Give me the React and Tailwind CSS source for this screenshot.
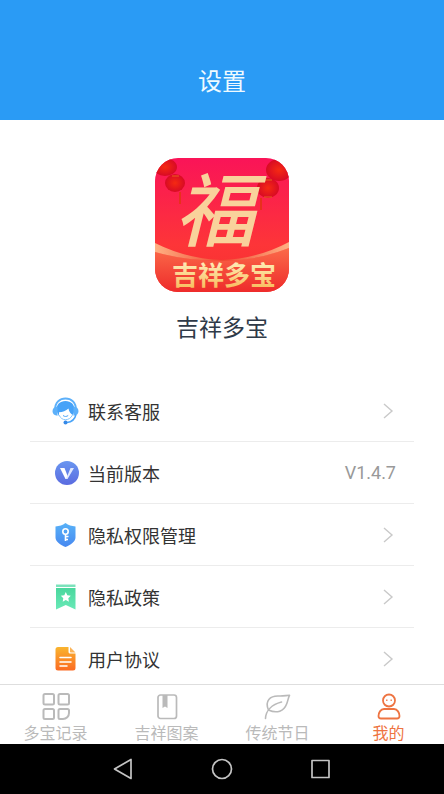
import React from "react";

function AppLogo() {
  return (
    <svg className="h-[134px] w-[134px]" viewBox="0 0 134 134" role="img" aria-label="吉祥多宝">
      <defs>
        <linearGradient id="logoRed" x1="0" y1="0" x2="0" y2="1">
          <stop offset="0" stopColor="#fa1458" />
          <stop offset="0.65" stopColor="#fd3538" />
          <stop offset="1" stopColor="#f4302c" />
        </linearGradient>
        <linearGradient id="logoBase" x1="0" y1="0" x2="0" y2="1">
          <stop offset="0" stopColor="#fb6a49" />
          <stop offset="1" stopColor="#ee2b2b" />
        </linearGradient>
        <linearGradient id="logoRibbon" x1="0" y1="0" x2="1" y2="0">
          <stop offset="0" stopColor="#ffb183" />
          <stop offset="0.5" stopColor="#f04a32" />
          <stop offset="1" stopColor="#ffb183" />
        </linearGradient>
        <linearGradient id="logoGold" x1="0" y1="0" x2="0" y2="1">
          <stop offset="0" stopColor="#fffbd0" />
          <stop offset="1" stopColor="#f8b552" />
        </linearGradient>
        <radialGradient id="logoLantern">
          <stop offset="0" stopColor="#f52a12" />
          <stop offset="1" stopColor="#d80a24" />
        </radialGradient>
        <clipPath id="logoClip">
          <rect width="134" height="134" rx="23" />
        </clipPath>
      </defs>
      <g clipPath="url(#logoClip)">
        <rect width="134" height="134" fill="url(#logoRed)" />
        <path d="M25 34v12M106 40v12" stroke="#e8301c" strokeWidth="2" />
        <ellipse cx="10" cy="9" rx="12" ry="9" fill="url(#logoLantern)" />
        <ellipse cx="20" cy="25" rx="10" ry="9" fill="url(#logoLantern)" />
        <ellipse cx="124" cy="12" rx="13" ry="11" fill="url(#logoLantern)" />
        <ellipse cx="113" cy="30" rx="11" ry="10" fill="url(#logoLantern)" />
        <path d="M17 18h7M109 22h8M109 39h8" stroke="#e9601f" strokeWidth="1" />
        <path d="M0 94Q34 103 67 103T134 90V134H0Z" fill="url(#logoBase)" />
        <path d="M0 85Q32 101 67 102Q102 101 134 84V90Q101 103 67 103Q32 103 0 94Z" fill="url(#logoRibbon)" />
        <text
          x="60"
          y="82"
          textAnchor="middle"
          fill="#f9d29b"
          fontSize="80"
          className="font-['Noto_Sans_CJK_SC',sans-serif] font-medium italic"
        >
          福
        </text>
        <text
          x="69"
          y="127"
          textAnchor="middle"
          fill="url(#logoGold)"
          fontSize="26"
          className="font-['Noto_Sans_CJK_SC',sans-serif] font-bold"
        >
          吉祥多宝
        </text>
      </g>
    </svg>
  );
}

function SupportIcon() {
  return (
    <svg className="h-7 w-7 shrink-0" viewBox="0 0 28 28" aria-hidden="true">
      <path d="M3 13C3 5 8 1.500 13.500 1.500S24 5 24 13" fill="none" stroke="#5cb0fa" strokeWidth="1.800" />
      <path d="M4.500 14C4 7.500 8 4 13.500 4s9.500 3.500 9 10l-1.500 4c-2.500-1-4-3.500-4.500-6.500-2.500 2.500-6 3.500-9.500 3.700V19Z" fill="#46a2f8" />
      <path d="M7 18c1.500 3.200 3.700 4.700 6.500 4.700 3 0 5.500-1.700 7-4.700" fill="none" stroke="#8ac8fc" strokeWidth="1" />
      <path d="M5.500 9.500v9.200C2.500 18.500.5 17 .5 14.200s2-4.500 5-4.700ZM21.500 9.500v9.200c3-.2 5-1.700 5-4.500s-2-4.500-5-4.700Z" fill="#5cb0fa" />
      <path d="M24 17.500c-1 4.500-4.500 7.500-9 8" fill="none" stroke="#4ba4f8" strokeWidth="1.500" />
      <path d="M11 18.500c1.700 1.300 3.500 1.300 5.200 0" fill="none" stroke="#4ba4f8" strokeWidth="1" />
      <circle cx="13.500" cy="25.500" r="2" fill="#3489e8" />
    </svg>
  );
}

function VersionIcon() {
  return (
    <svg className="h-7 w-7 shrink-0" viewBox="0 0 28 28" aria-hidden="true">
      <defs>
        <linearGradient id="versionFill" x1="0" y1="0" x2="0" y2="1">
          <stop offset="0" stopColor="#6a96f0" />
          <stop offset="1" stopColor="#5a6be0" />
        </linearGradient>
      </defs>
      <circle cx="15" cy="14" r="12" fill="url(#versionFill)" />
      <path d="M8 9h4.500l3.500 9-1.500 2h-1Z" fill="#fff" />
      <path d="M18.500 9H22l-6.500 11h-2l2-3.500Z" fill="#dfe8ff" />
    </svg>
  );
}

function ShieldIcon() {
  return (
    <svg className="h-7 w-7 shrink-0" viewBox="0 0 28 28" aria-hidden="true">
      <defs>
        <linearGradient id="shieldFill" x1="0" y1="0" x2="0" y2="1">
          <stop offset="0" stopColor="#58b2f8" />
          <stop offset="1" stopColor="#4788f0" />
        </linearGradient>
      </defs>
      <path d="M13.500 2c3 2.500 6 3 10 3.500v11c0 4-5 7.500-10 9.500-5-2-10-5.500-10-9.500v-11c4-.5 7-1 10-3.500Z" fill="url(#shieldFill)" />
      <g fill="none" stroke="#fff" strokeWidth="1.600">
        <circle cx="13.500" cy="10.500" r="2.700" />
        <path d="M13.500 13v7M13.500 15.500h3M13.500 18.500h2.500" />
      </g>
    </svg>
  );
}

function BookmarkIcon() {
  return (
    <svg className="h-7 w-7 shrink-0" viewBox="0 0 28 28" aria-hidden="true">
      <defs>
        <linearGradient id="bookmarkFill" x1="0" y1="0" x2="0" y2="1">
          <stop offset="0" stopColor="#4ad79d" />
          <stop offset="1" stopColor="#69e9b7" />
        </linearGradient>
      </defs>
      <path d="M4 1.500h19.500V4H4Z" fill="#7be2bb" />
      <path d="M4 5h19.500v21.500l-9.700-4.500L4 26.500Z" fill="url(#bookmarkFill)" />
      <path d="m13.800 9 1.500 3.200 3.500.5-2.500 2.500.6 3.500-3.100-1.700-3.100 1.700.6-3.500-2.500-2.500 3.500-.5Z" fill="#fff" />
    </svg>
  );
}

function DocumentIcon() {
  return (
    <svg className="h-7 w-7 shrink-0" viewBox="0 0 28 28" aria-hidden="true">
      <defs>
        <linearGradient id="documentFill" x1="0" y1="0" x2="0" y2="1">
          <stop offset="0" stopColor="#f9b52f" />
          <stop offset="1" stopColor="#fb6a22" />
        </linearGradient>
      </defs>
      <path d="M6 2h10.500v4.500c0 1.500.5 2 2 2h5V23a2.500 2.500 0 0 1-2.500 2.500H6A2.500 2.500 0 0 1 3.500 23V4.500A2.500 2.500 0 0 1 6 2Z" fill="url(#documentFill)" />
      <path d="m18 2 5.500 5.500H19c-.7 0-1-.3-1-1Z" fill="#fbb458" />
      <path d="M8 12.500h11M8 17h11M8 21h7" stroke="#fff" strokeWidth="1.500" strokeLinecap="round" />
    </svg>
  );
}

function Chevron() {
  return (
    <svg className="h-4 w-4" viewBox="0 0 16 16" fill="none" stroke="#c9c9c9" strokeWidth="1.400" aria-hidden="true">
      <path d="m4 1 8 7-8 7" />
    </svg>
  );
}

function GridIcon() {
  return (
    <svg className="h-7 w-7" viewBox="0 0 28 28" fill="none" stroke="currentColor" strokeWidth="2" aria-hidden="true">
      <rect x="1.500" y="2" width="10.500" height="10.500" rx="1.500" />
      <rect x="16.500" y="2" width="10.500" height="10.500" rx="1.500" />
      <rect x="1.500" y="17" width="10.500" height="10" rx="1.500" />
      <path d="M18 17h7.500a1.500 1.500 0 0 1 1.500 1.500v2.500a6 6 0 0 1-6 6h-3a1.500 1.500 0 0 1-1.500-1.500v-7A1.500 1.500 0 0 1 18 17Z" />
    </svg>
  );
}

function BookIcon() {
  return (
    <svg className="h-7 w-7" viewBox="0 0 28 28" fill="none" stroke="currentColor" strokeWidth="1.700" aria-hidden="true">
      <rect x="5" y="3" width="18.500" height="23.500" rx="2.500" />
      <path d="M9.500 3h5v13l-2.500-1.500L9.500 16Z" fill="currentColor" stroke="none" />
    </svg>
  );
}

function LeafIcon() {
  return (
    <svg className="h-7 w-7" viewBox="0 0 28 28" fill="none" stroke="currentColor" strokeWidth="1.600" strokeLinecap="round" strokeLinejoin="round" aria-hidden="true">
      <path d="M4.500 18C.5 9 6 3.500 15 4c4 .2 7-.5 10.500-.7-1.500 3-1.500 5.500-3 9C20 19 13 22 4.500 18Z" />
      <path d="M1.500 26.500c.3-8 6.500-14 16-16.500" />
    </svg>
  );
}

function PersonIcon() {
  return (
    <svg className="h-7 w-7" viewBox="0 0 28 28" fill="none" stroke="currentColor" strokeWidth="1.800" aria-hidden="true">
      <circle cx="14" cy="8.500" r="6" />
      <path d="M11.800 7.500v1.500M16.200 7.500v1.500" strokeWidth="1.300" />
      <path d="M9 17h10c3.500 0 5.500 4 5.500 7 0 1.500-.8 2.500-2.500 2.500H6c-1.700 0-2.500-1-2.500-2.500 0-3 2-7 5.500-7Z" />
    </svg>
  );
}

const rows = [
  { label: "联系客服", Icon: SupportIcon },
  { label: "当前版本", Icon: VersionIcon, value: "V1.4.7" },
  { label: "隐私权限管理", Icon: ShieldIcon },
  { label: "隐私政策", Icon: BookmarkIcon },
  { label: "用户协议", Icon: DocumentIcon },
];

const tabs = [
  { label: "多宝记录", Icon: GridIcon },
  { label: "吉祥图案", Icon: BookIcon },
  { label: "传统节日", Icon: LeafIcon },
  { label: "我的", Icon: PersonIcon, active: true },
];

export default function App() {
  return (
    <div className="flex h-screen flex-col bg-white font-['Noto_Sans_CJK_SC',sans-serif]">
      <header className="flex h-[120px] shrink-0 items-end justify-center bg-[#2a9bf5] pb-6">
        <h1 className="text-2xl text-[#eefaff]">设置</h1>
      </header>

      <main className="min-h-0 flex-1 overflow-hidden px-[30px] pt-[38px]">
        <div className="flex flex-col items-center gap-[18px]">
          <AppLogo />
          <h2 className="text-[23px] leading-8 text-[#2f3a48]">吉祥多宝</h2>
        </div>
        <ul className="mt-[38px] divide-y divide-[#ececec]">
          {rows.map(({ label, Icon, value }) => (
            <li key={label}>
              <button type="button" className="flex h-[61px] w-full items-center gap-2 pr-[18px] pl-[22px] text-left">
                <Icon />
                <span className="flex-1 text-lg text-[#333333]">{label}</span>
                {value ? (
                  <span className="font-['Roboto',sans-serif] text-lg text-[#999999]">{value}</span>
                ) : (
                  <Chevron />
                )}
              </button>
            </li>
          ))}
        </ul>
      </main>

      <nav className="grid h-[60px] shrink-0 grid-cols-4 border-t border-[#dedede] bg-white">
        {tabs.map(({ label, Icon, active }) => (
          <button
            key={label}
            type="button"
            aria-current={active ? "page" : undefined}
            className={`flex flex-col items-center justify-end ${active ? "text-[#ee7442]" : "text-[#bababa]"}`}
          >
            <Icon />
            <span className="text-base leading-6">{label}</span>
          </button>
        ))}
      </nav>

      <footer className="flex h-[50px] shrink-0 items-center justify-center gap-[75px] bg-black text-[#c4c4c4]">
        <button type="button" aria-label="返回">
          <svg className="h-6 w-6" viewBox="0 0 24 24" fill="none" stroke="currentColor" strokeWidth="1.700" strokeLinejoin="round">
            <path d="M20 2.500v19L3.500 12Z" />
          </svg>
        </button>
        <button type="button" aria-label="主屏幕">
          <svg className="h-6 w-6" viewBox="0 0 24 24" fill="none" stroke="currentColor" strokeWidth="1.700">
            <circle cx="12" cy="12" r="9.500" />
          </svg>
        </button>
        <button type="button" aria-label="最近任务">
          <svg className="h-6 w-6" viewBox="0 0 24 24" fill="none" stroke="currentColor" strokeWidth="1.700" strokeLinejoin="round">
            <rect x="3" y="3.500" width="17" height="17" />
          </svg>
        </button>
      </footer>
    </div>
  );
}
